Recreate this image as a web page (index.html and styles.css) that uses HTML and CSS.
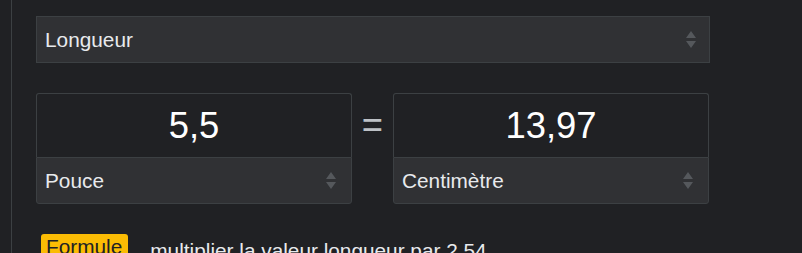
FILE: index.html
```html
<!DOCTYPE html>
<html lang="fr">
  <head>
    <meta charset="UTF-8" />
    <meta name="viewport" content="width=device-width, initial-scale=1.0" />
    <title>Convertisseur</title>
    <link rel="stylesheet" href="styles.css">
  </head>
  <body>
    <div class="panel">
      <div class="select select-top">
        <span>Longueur</span>
        <svg class="arrows" width="10" height="17" viewBox="0 0 10 17"><path d="M5 0 L10 7 H0 Z M0 10 H10 L5 17 Z" /></svg>
      </div>

      <div class="converter">
        <div class="unit">
          <div class="value">5,5</div>
          <div class="select select-unit">
            <span>Pouce</span>
            <svg class="arrows" width="10" height="17" viewBox="0 0 10 17"><path d="M5 0 L10 7 H0 Z M0 10 H10 L5 17 Z" /></svg>
          </div>
        </div>
        <div class="equals">=</div>
        <div class="unit">
          <div class="value">13,97</div>
          <div class="select select-unit">
            <span>Centimètre</span>
            <svg class="arrows" width="10" height="17" viewBox="0 0 10 17"><path d="M5 0 L10 7 H0 Z M0 10 H10 L5 17 Z" /></svg>
          </div>
        </div>
      </div>

      <div class="formula">
        <span class="badge">Formule</span>
        <span class="formula-text">multiplier la valeur longueur par 2,54</span>
      </div>
    </div>
  </body>
</html>
```

FILE: styles.css
```css
body {
  margin: 0;
  overflow: hidden;
  background-color: #202124;
  color: #e8eaed;
  font-family: "Liberation Sans", Arial, sans-serif;
  font-size: 20.8px;
}
.panel {
  margin-left: 11px;
  min-height: 253px;
  border-left: 1px solid #3c4043;
  padding: 16px 0 0 24px;
  box-sizing: border-box;
}
.select {
  display: flex;
  justify-content: space-between;
  align-items: center;
  box-sizing: border-box;
  background: #303134;
  border: 1px solid #3c4043;
  padding: 0 15px 0 8px;
}
.select-top {
  width: 674px;
  height: 47px;
  padding-right: 13px;
}
.arrows {
  fill: #55585c;
}
.converter {
  display: flex;
  margin-top: 30px;
}
.unit {
  width: 316px;
}
.value {
  height: 64px;
  box-sizing: border-box;
  display: flex;
  justify-content: center;
  align-items: center;
  border: 1px solid #3c4043;
  border-bottom: none;
  border-radius: 3px 3px 0 0;
  color: #fff;
  font-size: 36.4px;
}
.select-unit {
  height: 47px;
  border-radius: 0 0 3px 3px;
}
.equals {
  width: 41px;
  height: 64px;
  display: flex;
  justify-content: center;
  align-items: center;
  color: #bdc1c6;
  font-size: 36.4px;
}
.formula {
  display: flex;
  align-items: flex-start;
  margin-top: 30px;
  margin-left: 5px;
}
.badge {
  background: #fbbc04;
  color: #202124;
  border-radius: 3px;
  padding: 1px 6px 2px 5px;
}
.formula-text {
  margin-left: 22px;
  padding-top: 5px;
}
```
